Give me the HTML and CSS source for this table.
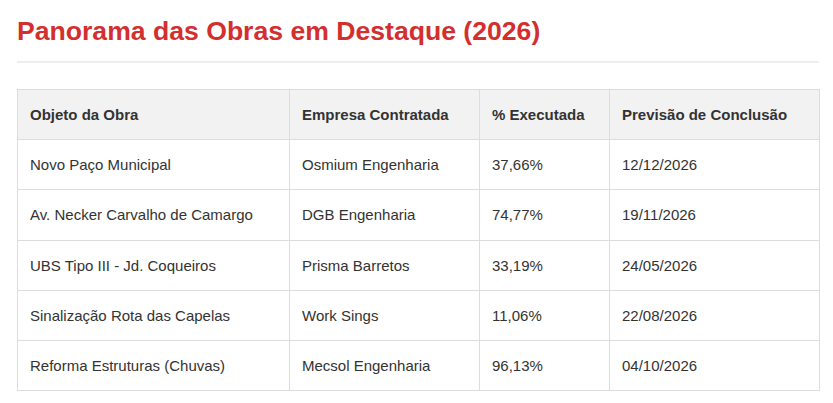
FILE: index.html
```html
<!DOCTYPE html>
<html lang="pt-BR">
<head>
<meta charset="utf-8">
<title>Panorama das Obras em Destaque (2026)</title>
<link rel="stylesheet" href="styles.css">
</head>
<body>
<main class="page">
  <h1 class="title">Panorama das Obras em Destaque (2026)</h1>
  <table class="obras">
    <colgroup>
      <col class="c1"><col class="c2"><col class="c3"><col class="c4">
    </colgroup>
    <thead>
      <tr><th>Objeto da Obra</th><th>Empresa Contratada</th><th>% Executada</th><th>Previsão de Conclusão</th></tr>
    </thead>
    <tbody>
      <tr><td>Novo Paço Municipal</td><td>Osmium Engenharia</td><td>37,66%</td><td>12/12/2026</td></tr>
      <tr><td>Av. Necker Carvalho de Camargo</td><td>DGB Engenharia</td><td>74,77%</td><td>19/11/2026</td></tr>
      <tr><td>UBS Tipo III - Jd. Coqueiros</td><td>Prisma Barretos</td><td>33,19%</td><td>24/05/2026</td></tr>
      <tr><td>Sinalização Rota das Capelas</td><td>Work Sings</td><td>11,06%</td><td>22/08/2026</td></tr>
      <tr><td>Reforma Estruturas (Chuvas)</td><td>Mecsol Engenharia</td><td>96,13%</td><td>04/10/2026</td></tr>
    </tbody>
  </table>
</main>
</body>
</html>
```
FILE: styles.css
```css
html, body { margin: 0; padding: 0; background: #fff; }
body { font-family: "Liberation Sans", Arial, sans-serif; color: #333; }
.page { padding: 15px 14px 0 17px; }
.title {
  margin: 0;
  padding: 0 0 14px 0;
  font-size: 26.6px;
  line-height: 32px;
  font-weight: bold;
  color: #d32f2f;
  border-bottom: 2px solid #eee;
}
.obras {
  margin-top: 26px;
  width: 802px;
  border-collapse: collapse;
  table-layout: fixed;
  font-size: 15px;
}
.c1 { width: 272px; }
.c2 { width: 190px; }
.c3 { width: 130px; }
.c4 { width: 210px; }
.obras th, .obras td {
  border: 1px solid #ddd;
  padding: 0 12px;
  height: 49.2px;
  text-align: left;
  vertical-align: middle;
  color: #333;
}
.obras th { background: #f2f2f2; font-weight: bold; }
```
